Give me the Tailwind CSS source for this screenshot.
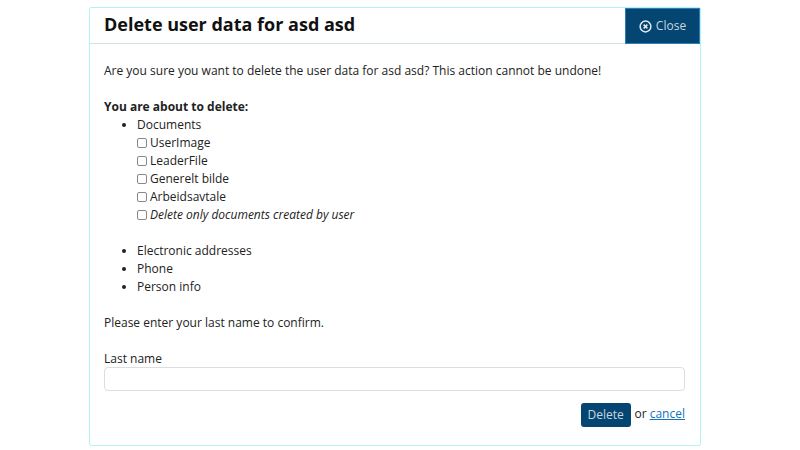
<!DOCTYPE html>
<html>
<head>
  <script src="https://cdn.jsdelivr.net/npm/@tailwindcss/browser@4"></script>
</head>
<body class="w-[800px] h-[450px] overflow-hidden bg-white font-['Open_Sans',sans-serif] text-[12px] leading-[18px] text-[#222]">
  <div class="w-[612px] h-[439px] ml-[89px] mt-[7px] border border-[#b5f3f3] rounded-[2px] bg-white">
    <!-- Header -->
    <div class="flex h-[36px] border-b border-[#cfe3e6]">
      <h1 class="flex-1 pl-[14px] text-[18px] leading-[33px] font-bold text-[#111]">Delete user data for asd asd</h1>
      <button class="flex items-center justify-center gap-[4px] w-[75px] h-[36px] bg-[#054571] border border-[#2a7fb5] text-[12px] text-[#c9d6df]">
        <svg class="w-[13px] h-[13px]" viewBox="0 0 14 14" fill="none" stroke="#e4ebf0">
          <circle cx="7" cy="7" r="5.8" stroke-width="1.6"/>
          <path d="M5 5l4 4M9 5l-4 4" stroke-width="1.7"/>
        </svg>
        Close
      </button>
    </div>

    <!-- Body -->
    <div class="px-[14px] pt-[18px]">
      <p>Are you sure you want to delete the user data for asd asd? This action cannot be undone!</p>

      <p class="mt-[18px] font-bold">You are about to delete:</p>
      <ul class="list-disc pl-[33px]">
        <li>
          Documents
          <div class="flex flex-col">
            <label class="flex items-center gap-[3px] h-[18px]"><input type="checkbox" class="w-[10px] h-[10px] mb-[1px] appearance-none border border-[#888] rounded-[2px] bg-white">UserImage</label>
            <label class="flex items-center gap-[3px] h-[18px]"><input type="checkbox" class="w-[10px] h-[10px] mb-[1px] appearance-none border border-[#888] rounded-[2px] bg-white">LeaderFile</label>
            <label class="flex items-center gap-[3px] h-[18px]"><input type="checkbox" class="w-[10px] h-[10px] mb-[1px] appearance-none border border-[#888] rounded-[2px] bg-white">Generelt bilde</label>
            <label class="flex items-center gap-[3px] h-[18px]"><input type="checkbox" class="w-[10px] h-[10px] mb-[1px] appearance-none border border-[#888] rounded-[2px] bg-white">Arbeidsavtale</label>
            <label class="flex items-center gap-[3px] h-[18px] italic"><input type="checkbox" class="w-[10px] h-[10px] mb-[1px] appearance-none border border-[#888] rounded-[2px] bg-white">Delete only documents created by user</label>
          </div>
        </li>
        <li class="mt-[18px]">Electronic addresses</li>
        <li>Phone</li>
        <li>Person info</li>
      </ul>

      <p class="mt-[18px]">Please enter your last name to confirm.</p>

      <label class="block mt-[18px]">Last name</label>
      <input type="text" class="block w-[581px] h-[24px] -mt-[1px] border border-[#ddd] rounded-[4px] bg-white">

      <div class="flex items-center justify-end gap-[3px] mt-[12px] w-[581px]">
        <button class="w-[50px] h-[24px] mr-[1px] bg-[#054571] rounded-[3px] text-[#c9d6df]">Delete</button>
        <span class="-mt-[2px]">or</span>
        <a href="#" class="-mt-[2px] text-[#0f74bd] underline">cancel</a>
      </div>
    </div>
  </div>
</body>
</html>
